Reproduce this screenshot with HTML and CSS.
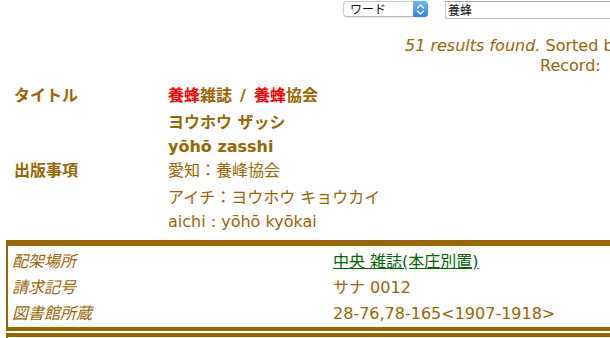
FILE: index.html
```html
<!DOCTYPE html>
<html lang="ja">
<head>
<meta charset="utf-8">
<title>養蜂雑誌</title>
<link rel="stylesheet" href="styles.css">
</head>
<body>
<div class="page">
  <div class="search">
    <div class="select">
      <span class="sel-text">ワード</span>
      <span class="stepper">
        <svg width="9" height="13" viewBox="0 0 9 13"><path d="M1.5 5 L4.5 2 L7.5 5 M1.5 8 L4.5 11 L7.5 8" fill="none" stroke="#fff" stroke-width="1.4" stroke-linecap="round" stroke-linejoin="round"/></svg>
      </span>
    </div>
    <div class="input">養蜂</div>
  </div>

  <div class="results">
    <div class="found"><em>51 results found.</em> Sorted by</div>
    <div class="record">Record:</div>
  </div>

  <div class="detail">
    <div class="field">
      <div class="label">タイトル</div>
      <div class="values bold">
        <div class="line"><span class="hit">養蜂</span>雑誌<span class="sep">/</span><span class="hit">養蜂</span>協会</div>
        <div class="line">ヨウホウ ザッシ</div>
        <div class="line latin">yōhō zasshi</div>
      </div>
    </div>
    <div class="field">
      <div class="label">出版事項</div>
      <div class="values">
        <div class="line">愛知：養峰協会</div>
        <div class="line">アイチ：ヨウホウ キョウカイ</div>
        <div class="line latin">aichi : yōhō kyōkai</div>
      </div>
    </div>
  </div>

  <div class="holdings">
    <div class="hrow"><div class="hlabel">配架場所</div><div class="hval"><a class="loc" href="#">中央 雑誌(本庄別置)</a></div></div>
    <div class="hrow"><div class="hlabel">請求記号</div><div class="hval">サナ 0012</div></div>
    <div class="hrow"><div class="hlabel">図書館所蔵</div><div class="hval">28-76,78-165&lt;1907-1918&gt;</div></div>
  </div>
  <div class="next"></div>
</div>
</body>
</html>
```

FILE: styles.css
```css
html, body {
  margin: 0;
  padding: 0;
  background: #fff;
}
body {
  width: 610px;
  height: 338px;
  overflow: hidden;
  font-family: "DejaVu Sans", "Noto Sans CJK JP", sans-serif;
  font-size: 16px;
  color: #996600;
}
.page {
  width: 900px;
}

/* search bar */
.search {
  display: flex;
  align-items: flex-start;
  height: 20px;
  padding-left: 343px;
  font-family: "Noto Sans CJK JP", sans-serif;
  font-size: 12px;
  color: #111;
}
.select {
  display: flex;
  align-items: stretch;
  width: 85px;
  height: 16px;
  margin-top: 1px;
  border: 1px solid #c9c9c9;
  border-bottom-color: #b9b9b9;
  border-radius: 4px;
  background: #fff;
  box-sizing: border-box;
  box-shadow: 0 0.5px 1px rgba(0,0,0,0.08);
}
.sel-text {
  flex: 1;
  padding-left: 6px;
  line-height: 14px;
}
.stepper {
  width: 15px;
  margin: -1px -1px -1px 0;
  border-radius: 0 4px 4px 0;
  background: linear-gradient(#6cb3fa, #2f86f0);
  display: flex;
  align-items: center;
  justify-content: center;
}
.input {
  width: 300px;
  height: 18px;
  margin-left: 17px;
  margin-top: 1px;
  border: 1px solid #c4c4c4;
  border-top-color: #a9a9a9;
  box-sizing: border-box;
  padding-left: 2px;
  line-height: 16px;
}

/* results */
.results {
  margin-top: 16px;
  line-height: 20px;
  white-space: nowrap;
}
.found {
  padding-left: 405px;
}
.found em {
  font-style: italic;
}
.record {
  padding-left: 540px;
}

/* detail */
.detail {
  margin-top: 6px;
}
.field {
  display: flex;
}
.label {
  width: 154px;
  padding-left: 14px;
  font-weight: bold;
  line-height: 27px;
}
.values.bold {
  font-weight: bold;
}
.line {
  line-height: 27px;
  white-space: nowrap;
}
.line.latin {
  line-height: 21px;
}
.hit {
  color: #ff0000;
}
.sep {
  margin: 0 8px;
}

/* holdings box */
.holdings {
  margin-top: 8px;
  margin-left: 6px;
  border-top: 6px solid #996600;
  border-left: 2px solid #996600;
  border-bottom: 4px solid #996600;
  padding: 3px 0 0;
}
.hrow {
  display: flex;
  line-height: 26px;
  white-space: nowrap;
}
.hlabel {
  width: 321px;
  padding-left: 4px;
  font-style: italic;
}
.loc {
  color: #006600;
  text-decoration: underline;
}
.next {
  margin-top: 2px;
  margin-left: 6px;
  height: 10px;
  border-top: 4px solid #996600;
  border-left: 2px solid #996600;
}
```
